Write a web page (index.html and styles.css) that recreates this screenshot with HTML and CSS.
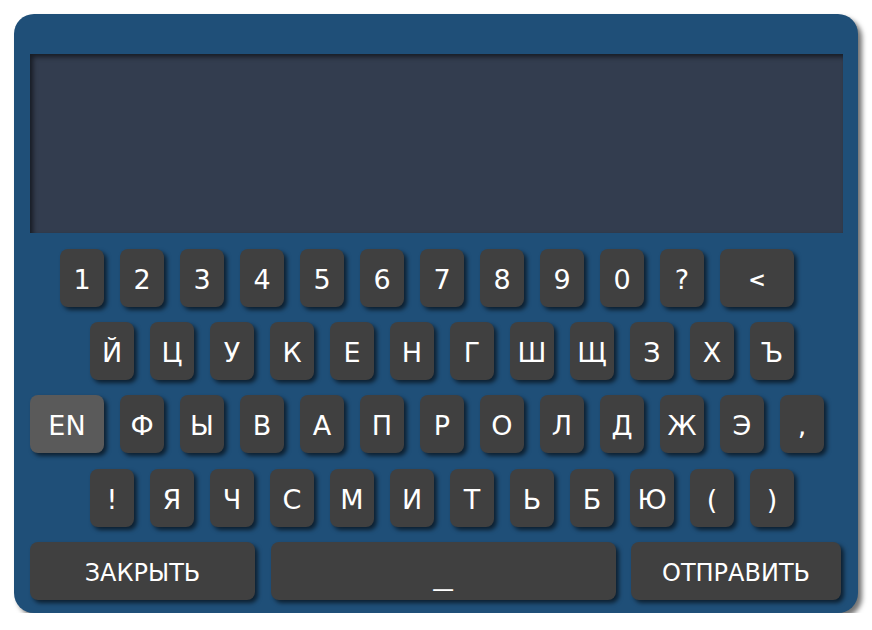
FILE: index.html
```html
<!DOCTYPE html>
<html lang="ru">
<head>
<meta charset="utf-8">
<title>Клавиатура</title>
<link rel="stylesheet" href="styles.css">
</head>
<body>
<div class="panel">
  <div class="screen"></div>
  <div class="keyboard">
    <div class="row row-1">
      <div class="key">1</div><div class="key">2</div><div class="key">3</div><div class="key">4</div><div class="key">5</div><div class="key">6</div><div class="key">7</div><div class="key">8</div><div class="key">9</div><div class="key">0</div><div class="key">?</div><div class="key key-wide key-back">&lt;</div>
    </div>
    <div class="row row-2">
      <div class="key">Й</div><div class="key">Ц</div><div class="key">У</div><div class="key">К</div><div class="key">Е</div><div class="key">Н</div><div class="key">Г</div><div class="key">Ш</div><div class="key">Щ</div><div class="key">З</div><div class="key">Х</div><div class="key">Ъ</div>
    </div>
    <div class="row row-3">
      <div class="key key-wide key-lang">EN</div><div class="key">Ф</div><div class="key">Ы</div><div class="key">В</div><div class="key">А</div><div class="key">П</div><div class="key">Р</div><div class="key">О</div><div class="key">Л</div><div class="key">Д</div><div class="key">Ж</div><div class="key">Э</div><div class="key">,</div>
    </div>
    <div class="row row-4">
      <div class="key">!</div><div class="key">Я</div><div class="key">Ч</div><div class="key">С</div><div class="key">М</div><div class="key">И</div><div class="key">Т</div><div class="key">Ь</div><div class="key">Б</div><div class="key">Ю</div><div class="key">(</div><div class="key">)</div>
    </div>
    <div class="row row-5">
      <div class="key key-action key-close">ЗАКРЫТЬ</div>
      <div class="key key-action key-space"><span class="space-mark">_</span></div>
      <div class="key key-action key-send">ОТПРАВИТЬ</div>
    </div>
  </div>
</div>
</body>
</html>
```

FILE: styles.css
```css
html, body {
  margin: 0;
  padding: 0;
  background: #ffffff;
}

body {
  padding: 14px 0 0 14px;
  font-family: "DejaVu Sans", "Noto Sans", sans-serif;
}

.panel {
  box-sizing: border-box;
  width: 844px;
  height: 599px;
  background: #1f4f78;
  border-radius: 20px;
  box-shadow: 4px 4px 5px rgba(0, 0, 0, 0.55);
  padding: 40px 15px 0 16px;
}

.screen {
  height: 179px;
  background: #333d4f;
  box-shadow: inset 3px 3px 5px rgba(0, 0, 0, 0.55);
}

.keyboard {
  margin-top: 16px;
  display: flex;
  flex-direction: column;
  gap: 15.2px;
}

.row {
  display: flex;
  gap: 16px;
  height: 58px;
}

.row-1 { padding-left: 30px; }
.row-2 { padding-left: 60px; }
.row-3 { padding-left: 0; }
.row-4 { padding-left: 60px; }
.row-5 { padding-left: 0; gap: 15.5px; }

.key {
  box-sizing: border-box;
  width: 44px;
  height: 58px;
  background: #404040;
  border-radius: 8px;
  box-shadow: 3px 3px 4px rgba(0, 0, 0, 0.6);
  color: #ffffff;
  font-size: 27px;
  display: flex;
  align-items: center;
  justify-content: center;
  padding-top: 3px;
}

.key-wide { width: 74px; }

.key-lang { background: #5a5a5a; }

.key-back {
  font-size: 21px;
  font-weight: bold;
}

.key-action {
  font-size: 24px;
  padding-top: 4px;
}

.key-close { width: 225px; }
.key-space { width: 345px; }
.key-send { width: 210px; }

.space-mark {
  display: inline-block;
  font-size: 24px;
  position: relative;
  top: 4px;
  transform: scaleX(1.6);
}
```
